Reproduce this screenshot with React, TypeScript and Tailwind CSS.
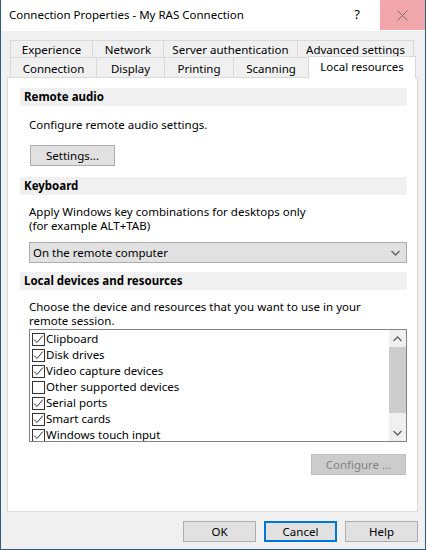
import React from 'react';

const font = { fontFamily: '"Segoe UI", "Noto Sans", sans-serif' };

const rowOne = [
  { label: 'Experience', w: 'w-[82px]' },
  { label: 'Network', w: 'w-[71px]' },
  { label: 'Server authentication', w: 'w-[134px]' },
  { label: 'Advanced settings', w: 'w-[117px]' },
];

const rowTwo = [
  { label: 'Connection', w: 'w-[86px]' },
  { label: 'Display', w: 'w-[68px]' },
  { label: 'Printing', w: 'w-[69px]' },
  { label: 'Scanning', w: 'w-[75px]' },
];

const devices = [
  { label: 'Clipboard', on: true },
  { label: 'Disk drives', on: true },
  { label: 'Video capture devices', on: true },
  { label: 'Other supported devices', on: false },
  { label: 'Serial ports', on: true },
  { label: 'Smart cards', on: true },
  { label: 'Windows touch input', on: true },
];

const Chevron: React.FC<{ up?: boolean }> = ({ up }) => (
  <svg width="9" height="6" viewBox="0 0 9 6" className="block">
    <polyline
      points={up ? '0.5,5 4.5,1 8.5,5' : '0.5,1 4.5,5 8.5,1'}
      fill="none"
      stroke="#606060"
      strokeWidth="1.3"
    />
  </svg>
);

const SectionHeader: React.FC<{ title: string }> = ({ title }) => (
  <div className="h-[18px] bg-[#f0f0f0] pl-[4px] flex items-center font-bold text-[11.5px] leading-none">{title}</div>
);

const CheckBox: React.FC<{ on: boolean }> = ({ on }) => (
  <div className="w-[13px] h-[13px] border border-[#333333] bg-white shrink-0 flex items-center justify-center">
    {on && (
      <svg width="11" height="11" viewBox="0 0 11 11">
        <polyline points="1,5.5 4,8.5 10,1.5" fill="none" stroke="#333333" strokeWidth="1" />
      </svg>
    )}
  </div>
);

export default function App() {
  return (
    <div
      className="w-[426px] h-[550px] flex flex-col bg-[#f0f0f0] border-x border-b border-[#2b5d7d] text-black text-[11.5px] overflow-hidden"
      style={font}
    >
      {/* Title bar */}
      <div className="h-[31px] bg-white flex items-start shrink-0">
        <div className="pl-[8px] pt-[7px] text-[11.5px] leading-[16px] flex-1">Connection Properties - My RAS Connection</div>
        <div className="w-[46px] h-[30px] flex items-center justify-center text-[13px] mr-[-1px]">?</div>
        <div className="w-[1px]" />
        <div className="w-[45px] h-[30px] bg-[#f1a6ab] flex items-center justify-center">
          <svg width="11" height="11" viewBox="0 0 11 11">
            <path d="M0.5 0.5 L10.5 10.5 M10.5 0.5 L0.5 10.5" stroke="#7d6a6c" strokeWidth="1" fill="none" />
          </svg>
        </div>
      </div>

      {/* Body */}
      <div className="flex-1 flex flex-col pl-[6px] pr-[7px]">
        {/* Tabs */}
        <div className="pl-[3px] mt-[9px] flex">
          {rowOne.map((t, i) => (
            <div
              key={t.label}
              className={`${t.w} h-[17px] border-t border-l border-[#d9d9d9] flex items-center justify-center leading-none pt-[1px] ${
                i === rowOne.length - 1 ? 'border-r' : ''
              }`}
            >
              {t.label}
            </div>
          ))}
        </div>
        <div className="pl-[3px] flex items-end h-[20px]">
          {rowTwo.map((t) => (
            <div
              key={t.label}
              className={`${t.w} h-[20px] border-t border-l border-[#d9d9d9] flex items-center justify-center leading-none pt-[2px]`}
            >
              {t.label}
            </div>
          ))}
          <div className="w-[108px] h-[22px] -mb-px relative z-10 bg-white border-t border-x border-[#d9d9d9] flex items-center justify-center leading-none pb-[2px]">
            Local resources
          </div>
        </div>

        {/* Panel */}
        <div className="w-[411px] h-[435px] bg-white border border-[#d9d9d9] pt-[10px] pl-[12px] pr-[10px]">
          <SectionHeader title="Remote audio" />
          <div className="mt-[12px] pl-[9px] leading-[14px]">Configure remote audio settings.</div>
          <div className="mt-[13px] ml-[10px] w-[85px] h-[21px] bg-[#e1e1e1] border border-[#adadad] flex items-center justify-center leading-none">
            Settings...
          </div>

          <div className="mt-[11px]">
            <SectionHeader title="Keyboard" />
          </div>
          <div className="mt-[10px] pl-[9px] leading-[14px]">
            Apply Windows key combinations for desktops only
            <br />
            (for example ALT+TAB)
          </div>
          <div className="mt-[9px] ml-[9px] h-[21px] bg-[#e1e1e1] border border-[#adadad] flex items-center justify-between pl-[3px] pr-[6px] leading-none">
            <span>On the remote computer</span>
            <Chevron />
          </div>

          <div className="mt-[9px]">
            <SectionHeader title="Local devices and resources" />
          </div>
          <div className="mt-[10px] pl-[9px] leading-[14px] pr-[4px]">
            Choose the device and resources that you want to use in your remote session.
          </div>
          <div className="mt-[1px] ml-[9px] h-[113px] border border-[#828282] bg-white flex overflow-hidden">
            <div className="flex-1 pt-[1px] pl-[2px]">
              {devices.map((d) => (
                <div key={d.label} className="h-[16px] flex items-center gap-[1px] leading-none">
                  <CheckBox on={d.on} />
                  <span>{d.label}</span>
                </div>
              ))}
            </div>
            <div className="w-[17px] bg-[#f0f0f0] flex flex-col">
              <div className="h-[17px] flex items-center justify-center">
                <Chevron up />
              </div>
              <div className="h-[66px] bg-[#cdcdcd]" />
              <div className="flex-1" />
              <div className="h-[17px] flex items-center justify-center">
                <Chevron />
              </div>
            </div>
          </div>
          <div className="flex justify-end mt-[12px] pr-[1px]">
            <div className="w-[95px] h-[21px] bg-[#cccccc] border border-[#bfbfbf] text-[#838383] flex items-center justify-center leading-none">
              Configure ...
            </div>
          </div>
        </div>

        {/* Dialog buttons */}
        <div className="flex justify-end gap-[8px] mt-[9px]">
          <div className="w-[73px] h-[21px] bg-[#e1e1e1] border border-[#adadad] flex items-center justify-center leading-none">
            OK
          </div>
          <div className="w-[73px] h-[21px] bg-[#e1e1e1] border-2 border-[#0078d7] flex items-center justify-center leading-none">
            Cancel
          </div>
          <div className="w-[73px] h-[21px] bg-[#e1e1e1] border border-[#adadad] flex items-center justify-center leading-none">
            Help
          </div>
        </div>
      </div>
    </div>
  );
}
